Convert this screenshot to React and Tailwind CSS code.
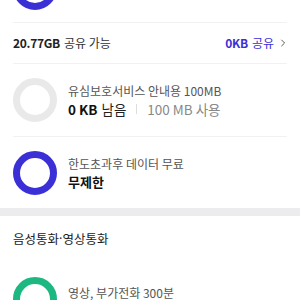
import React from 'react';

const Ring = ({ color }) => (
  <div className={`w-[44px] h-[44px] rounded-full border-[7px] ${color} shrink-0`} />
);

function App() {
  return (
    <div
      className="w-[300px] h-[300px] overflow-hidden bg-white text-[#222]"
      style={{ fontFamily: '"Noto Sans CJK KR", "Noto Sans", sans-serif' }}
    >
      {/* previous card tail */}
      <div className="px-[13px]">
        <div className="-mt-[34px] mb-[12px]">
          <div className="w-[44px] h-[44px] rounded-full border-[7px] border-[#3b30d6]" />
        </div>
        <div className="h-px bg-[#f1f1f3]" />

        {/* share row */}
        <div className="h-[40px] flex items-center justify-between text-[12px]">
          <div>
            <span className="font-bold tracking-[-0.3px]">20.77GB</span>
            <span className="ml-1 text-[#333]">공유 가능</span>
          </div>
          <div className="flex items-center text-[#3b30d6]">
            <span className="font-bold tracking-[-0.3px]">0KB</span>
            <span className="ml-1">공유</span>
            <svg viewBox="0 0 10 10" className="w-[8px] h-[8px] ml-[5px]" fill="none" stroke="#555" strokeWidth="1.2">
              <path d="M3 1l4 4-4 4" />
            </svg>
          </div>
        </div>
        <div className="h-px bg-[#f1f1f3]" />

        {/* usim row */}
        <div className="h-[72px] flex items-center gap-[11px]">
          <Ring color="border-[#e9e9e9]" />
          <div className="flex flex-col leading-[18px]">
            <span className="text-[12px] text-[#555]">유심보호서비스 안내용 100MB</span>
            <div className="flex items-center text-[13.5px]">
              <span className="font-bold text-[#111]">0 KB</span>
              <span className="ml-1 text-[#222]">남음</span>
              <span className="mx-[10px] w-px h-[10px] bg-[#ddd]" />
              <span className="text-[#888]">100 MB 사용</span>
            </div>
          </div>
        </div>
        <div className="h-px bg-[#f1f1f3]" />

        {/* unlimited row */}
        <div className="h-[71px] flex items-center gap-[11px]">
          <Ring color="border-[#3b30d6]" />
          <div className="flex flex-col leading-[18px]">
            <span className="text-[12px] text-[#555]">한도초과후 데이터 무료</span>
            <span className="text-[13px] font-bold text-[#111]">무제한</span>
          </div>
        </div>
      </div>

      <div className="h-[8px] bg-[#ececee]" />

      {/* voice section */}
      <div className="px-[13px]">
        <div className="h-[46px] flex items-center text-[12.5px] text-[#222]">
          음성통화<span style={{ fontFamily: '"Noto Sans", sans-serif' }}>·</span>영상통화
        </div>
        <div className="h-[72px] flex gap-[11px] pt-[15px] items-start">
          <Ring color="border-[#1db881]" />
          <div className="flex flex-col leading-[18px] pt-[7px]">
            <span className="text-[12px] text-[#555]">영상, 부가전화 300분</span>
          </div>
        </div>
      </div>
    </div>
  );
}

export default App;
